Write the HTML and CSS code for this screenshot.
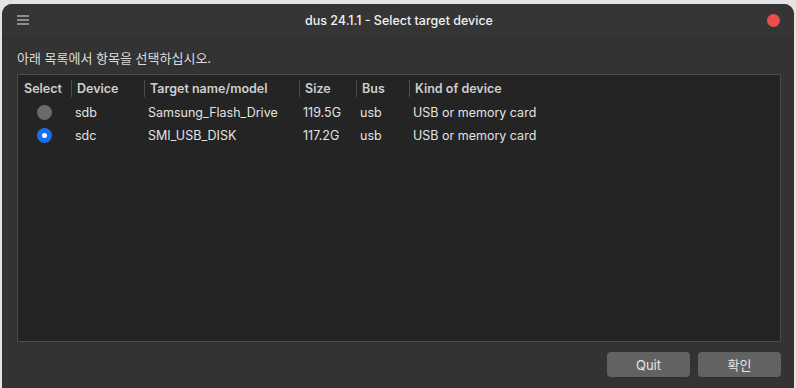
FILE: index.html
```html
<!DOCTYPE html>
<html>
<head>
    <title>dus 24.1.1 - Select target device</title>
    <link rel="stylesheet" href="styles.css">
</head>
<body>
    <div class="window">
        <div class="titlebar">
            <span class="menu-icon">
                <svg width="12" height="10" viewBox="0 0 12 10">
                    <path d="M0 1h12M0 5h12M0 9h12" stroke="#e8e8e8" stroke-width="1.2"/>
                </svg>
            </span>
            <span class="title">dus 24.1.1 - Select target device</span>
            <span class="close-dot"></span>
        </div>

        <div class="content">
            <p class="prompt">아래 목록에서 항목을 선택하십시오.</p>

            <!-- device list -->
            <div class="device-list">
                <div class="row head">
                    <div class="cell first">Select</div>
                    <div class="cell">Device</div>
                    <div class="cell">Target name/model</div>
                    <div class="cell">Size</div>
                    <div class="cell">Bus</div>
                    <div class="cell">Kind of device</div>
                </div>
                <div class="row">
                    <div class="cell radio-cell"><span class="radio"></span></div>
                    <div class="cell">sdb</div>
                    <div class="cell">Samsung_Flash_Drive</div>
                    <div class="cell">119.5G</div>
                    <div class="cell">usb</div>
                    <div class="cell">USB or memory card</div>
                </div>
                <div class="row">
                    <div class="cell radio-cell"><span class="radio checked"></span></div>
                    <div class="cell">sdc</div>
                    <div class="cell">SMI_USB_DISK</div>
                    <div class="cell">117.2G</div>
                    <div class="cell">usb</div>
                    <div class="cell">USB or memory card</div>
                </div>
            </div>

            <div class="buttons">
                <button class="btn">Quit</button>
                <button class="btn">확인</button>
            </div>
        </div>
    </div>
</body>
</html>
```

FILE: styles.css
```css
* {
    margin: 0px;
    padding: 0px;
    box-sizing: border-box;
    font-family: 'Inter', 'Noto Sans CJK KR', sans-serif;
}

body {
    background-color: #e4e4e4;
    height: 388px;
    overflow: hidden;
}

.window {
    margin: 4px 2px 0 2px;
    height: 384px;
    background-color: #333333;
    border-radius: 10px 10px 0 0;
    color: #e2e2e2;
    font-size: 12.5px;
    display: flex;
    flex-direction: column;
}

.titlebar {
    height: 33px;
    display: flex;
    align-items: center;
    padding: 0 14px 0 15px;
    background-color: #353535;
    border-bottom: 1px solid #2e2e2e;
    border-radius: 10px 10px 0 0;
}

.menu-icon {
    width: 12px;
    height: 10px;
    display: flex;
}

.title {
    flex: 1;
    text-align: center;
    font-weight: 500;
    color: #f0f0f0;
    padding-left: 2px;
}

.close-dot {
    width: 13px;
    height: 13px;
    border-radius: 50%;
    background-color: #ec4e4b;
}

.content {
    flex: 1;
    padding: 12px 13px 0 15px;
    display: flex;
    flex-direction: column;
}

.prompt {
    font-size: 13px;
    line-height: 18px;
    color: #dcdcdc;
    margin-bottom: 7px;
}

.device-list {
    height: 268px;
    background-color: #242424;
    border: 1px solid #4c4c4c;
}

.row {
    display: grid;
    grid-template-columns: 53px 73px 155px 57px 53px 1fr;
    height: 23px;
    align-items: center;
}

.row.head {
    height: 26px;
    font-weight: 600;
    color: #cfcfcf;
}

.cell {
    padding-left: 4px;
    white-space: nowrap;
}

.row.head .cell {
    border-left: 1px solid #4a4a4a;
    line-height: 17px;
    padding-left: 5px;
}

.row.head .cell.first {
    border-left: none;
    padding-left: 6px;
}

.radio-cell {
    display: flex;
    justify-content: center;
    padding-left: 0;
}

.radio {
    width: 15px;
    height: 15px;
    border-radius: 50%;
    background-color: #6a6a6a;
}

.radio.checked {
    background-color: #1a6ef0;
    position: relative;
}

.radio.checked::after {
    content: "";
    position: absolute;
    left: 5px;
    top: 5px;
    width: 5px;
    height: 5px;
    border-radius: 50%;
    background-color: #ffffff;
}

.buttons {
    display: flex;
    justify-content: flex-end;
    gap: 8px;
    margin-top: 10px;
}

.btn {
    width: 83px;
    height: 25px;
    border: none;
    border-radius: 4px;
    background-color: #626262;
    color: #e6e6e6;
    font-size: 13px;
}
```
